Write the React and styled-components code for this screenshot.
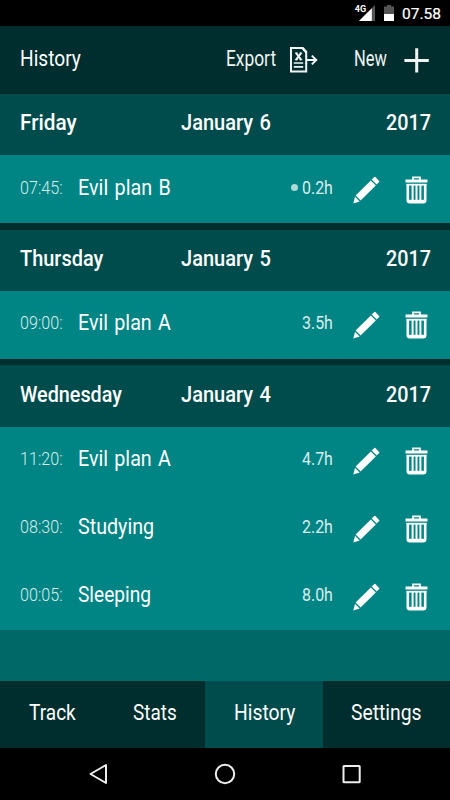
import React, { useLayoutEffect, useRef, useState } from 'react';
import styled, { createGlobalStyle } from 'styled-components';

const GlobalStyle = createGlobalStyle`
  * {
    box-sizing: border-box;
  }

  body {
    margin: 0;
    background: #000;
    font-family: Roboto, "Liberation Sans", sans-serif;
  }
`;

const Screen = styled.div`
  width: 450px;
  height: 800px;
  display: flex;
  flex-direction: column;
  overflow: hidden;
  background: #006866;
  color: #fff;
`;

const StatusBar = styled.div`
  height: 26px;
  flex-shrink: 0;
  display: flex;
  justify-content: flex-end;
  align-items: center;
  padding-right: 9px;
  background: #000;
`;

const NetworkLabel = styled.span`
  font-size: 9px;
  font-weight: 700;
  line-height: 9px;
  align-self: flex-start;
  margin: 5px -7px 0 0;
  z-index: 1;
`;

const Clock = styled.span`
  font-size: 15.5px;
  margin-left: 8px;
  padding-top: 2px;
  -webkit-text-stroke: 0.2px #fff;
`;

const StatusSvg = styled.svg`
  display: block;
  margin-left: ${({ $gap }) => $gap || 0}px;
`;

const Header = styled.header`
  height: 68px;
  flex-shrink: 0;
  display: flex;
  align-items: center;
  padding: 0 21px 0 20px;
  background: #002d2d;
`;

const HeaderButton = styled.button`
  display: flex;
  align-items: center;
  gap: ${({ $gap }) => $gap}px;
  margin-left: ${({ $push }) => $push};
  padding: 0;
  border: 0;
  background: none;
  color: #f0f4f4;
  font-family: inherit;
`;

const TextBox = styled.span`
  display: block;
  flex-shrink: 0;
  width: ${({ $width }) => $width}px;
  padding-bottom: ${({ $lift }) => $lift}px;
  text-align: left;
  white-space: nowrap;
  font-size: ${({ $small }) => ($small ? 18 : 21.5)}px;
  font-weight: ${({ $weight }) => $weight || 400};
  color: ${({ $muted }) => ($muted ? '#d8eeee' : 'inherit')};
  word-spacing: 1.5px;
`;

const TextRun = styled.span`
  display: inline-block;
  transform-origin: 0 50%;
`;

const DayHeader = styled.div`
  height: 61.3px;
  display: flex;
  align-items: center;
  padding: 0 19px 0 20px;
  background: #004b4b;
`;

const YearCell = styled.div`
  display: flex;
  flex: 1;
  justify-content: flex-end;
`;

const NameCell = styled.div`
  width: 161px;
`;

const History = styled.main`
  flex: 1;
  min-height: 0;
`;

const Divider = styled.div`
  height: 6.6px;
  background: #002d2d;
`;

const Row = styled.div`
  height: 67.8px;
  display: flex;
  align-items: center;
  padding: 0 22px 0 20px;
  background: #008484;
`;

const RowName = styled.div`
  flex: 1;
  margin-left: 15px;
`;

const Dot = styled.span`
  width: 7px;
  height: 7px;
  margin: 0 4px 3px 0;
  border-radius: 50%;
  background: #acd9d9;
`;

const IconButton = styled.button`
  display: flex;
  padding: 1px 0 0;
  border: 0;
  margin-left: ${({ $gap }) => $gap}px;
  background: none;
  color: #fff;
`;

const Tabs = styled.nav`
  height: 67px;
  flex-shrink: 0;
  display: flex;
  background: #002d2d;
`;

const Tab = styled.button`
  width: ${({ $width }) => $width}px;
  display: flex;
  align-items: center;
  justify-content: center;
  padding: 0;
  border: 0;
  background: ${({ $active }) => ($active ? '#004b4b' : 'transparent')};
  color: #fff;
  font-family: inherit;
`;

const SystemBar = styled.div`
  height: 52px;
  flex-shrink: 0;
  display: flex;
  align-items: center;
  justify-content: space-between;
  padding: 0 88px;
  background: #000;
`;

// Condenses a label so that it fills the width given for it
const Label = ({ width, lift = 4, small, weight, muted, children }) => {
  const ref = useRef(null);
  const [scale, setScale] = useState(1);

  useLayoutEffect(() => {
    setScale(width / ref.current.offsetWidth);
  }, [width, children]);

  return (
    <TextBox $width={width} $lift={lift} $small={small} $weight={weight} $muted={muted}>
      <TextRun ref={ref} style={{ transform: `scaleX(${scale})` }}>{children}</TextRun>
    </TextBox>
  );
};

const ExportIcon = () => (
  <svg width="28" height="26" viewBox="0 0 28 26" fill="none" stroke="currentColor">
    <path d="M16.2 9.5V5L12.6 1H1v23.6h15.2V16" strokeWidth="2" />
    <path d="M16.2 9v8" strokeWidth="2" />
    <path d="M12.4 1l4 4.4" strokeWidth="2.4" />
    <path d="M6 5.8l5.2 7M11.2 5.8l-5.2 7" strokeWidth="2" />
    <path d="M5 6h2.6M9.6 6h2.6M5 12.6h2.6M9.6 12.6h2.6" strokeWidth="1.1" />
    <path d="M3.8 16h9.4M3.8 19.8h9.4" strokeWidth="1.7" />
    <path d="M16.5 13h10M21.8 8.6l4.5 4.4-4.5 4.4" strokeWidth="2" />
  </svg>
);

const PlusIcon = () => (
  <svg width="25" height="25" viewBox="0 0 25 25" fill="currentColor">
    <path d="M11.2 0.3h3v10.6h10.6V14H14.2v10.4h-3V14H0.4v-3.1h10.8z" />
  </svg>
);

const PencilIcon = () => (
  <svg width="27" height="28" viewBox="0 0 27 28" fill="currentColor">
    <path d="M21.2 1.1Q21.8.5 22.4 1.1l3.7 3.8q.6.6 0 1.2L23.6 8.6 18.7 3.6z" />
    <path d="M17.8 4.5l5 5L7.6 24.5l-5-5z" />
    <path d="M2 20.8l4.7 4.8L0.3 27.4z" />
  </svg>
);

const TrashIcon = () => (
  <svg width="23" height="28" viewBox="0 0 23 28" fill="none" stroke="currentColor">
    <path d="M8 4V1.3h7V4" strokeWidth="1.7" />
    <path d="M0.5 5h22" strokeWidth="3" />
    <path d="M2.8 8v16.2q0 2 2 2h13.4q2 0 2-2V8" strokeWidth="2.6" />
    <path d="M1.5 8.7h20" strokeWidth="1.8" />
    <path d="M7.6 9v16M11.5 9v16M15.4 9v16" strokeWidth="2" />
    <path d="M3 25.2h17" strokeWidth="2.8" />
  </svg>
);

const days = [
  {
    name: 'Friday', nameWidth: 57, date: 'January 6',
    entries: [{ time: '07:45:', name: 'Evil plan B', width: 93, hours: '0.2h', running: true }],
  },
  {
    name: 'Thursday', nameWidth: 83.5, date: 'January 5',
    entries: [{ time: '09:00:', name: 'Evil plan A', width: 92.5, hours: '3.5h' }],
  },
  {
    name: 'Wednesday', nameWidth: 102, date: 'January 4',
    entries: [
      { time: '11:20:', name: 'Evil plan A', width: 92.5, hours: '4.7h' },
      { time: '08:30:', name: 'Studying', width: 76, hours: '2.2h' },
      { time: '00:05:', name: 'Sleeping', width: 73, hours: '8.0h' },
    ],
  },
];

const tabs = [
  { name: 'Track', width: 104, text: 47 },
  { name: 'Stats', width: 101.4, text: 44 },
  { name: 'History', width: 117.3, text: 61 },
  { name: 'Settings', width: 127.3, text: 71 },
];

const App = () => {
  const [active, setActive] = useState('History');

  return (
    <>
      <GlobalStyle />
      <Screen>
        <StatusBar>
          <NetworkLabel>4G</NetworkLabel>
          <StatusSvg width="16" height="16" viewBox="0 0 16 16">
            <path d="M16 0v16H0z" fill="#555" />
            <path d="M12.8 3.2V16H0z" fill="#fff" />
          </StatusSvg>
          <StatusSvg $gap={9} width="10" height="16" viewBox="0 0 10 16">
            <path d="M3 0h4v1.5h3V9H0V1.5h3z" fill="#555" />
            <path d="M0 9h10v7H0z" fill="#fff" />
          </StatusSvg>
          <Clock>07.58</Clock>
        </StatusBar>

        <Header>
          <Label width={60.5}>History</Label>
          <HeaderButton $gap={14} $push="auto">
            <Label width={50}>Export</Label>
            <ExportIcon />
          </HeaderButton>
          <HeaderButton $gap={17} $push="36px">
            <Label width={33}>New</Label>
            <PlusIcon />
          </HeaderButton>
        </Header>

        <History>
          {days.map((day, index) => (
            <section key={day.name}>
              {index > 0 && <Divider />}
              <DayHeader>
                <NameCell>
                  <Label width={day.nameWidth} weight={500}>{day.name}</Label>
                </NameCell>
                <Label width={89.5} weight={500}>{day.date}</Label>
                <YearCell>
                  <Label width={45} weight={500}>2017</Label>
                </YearCell>
              </DayHeader>
              {day.entries.map((entry) => (
                <Row key={entry.time}>
                  <Label width={43} small weight={300} muted>{entry.time}</Label>
                  <RowName>
                    <Label width={entry.width}>{entry.name}</Label>
                  </RowName>
                  {entry.running && <Dot />}
                  <Label width={31} small muted>{entry.hours}</Label>
                  <IconButton $gap={20} aria-label="Edit"><PencilIcon /></IconButton>
                  <IconButton $gap={25} aria-label="Delete"><TrashIcon /></IconButton>
                </Row>
              ))}
            </section>
          ))}
        </History>

        <Tabs>
          {tabs.map((tab) => (
            <Tab
              key={tab.name}
              $width={tab.width}
              $active={tab.name === active}
              onClick={() => setActive(tab.name)}
            >
              <Label width={tab.text}>{tab.name}</Label>
            </Tab>
          ))}
        </Tabs>

        <SystemBar>
          <svg width="20" height="22" viewBox="0 0 20 22" fill="none" stroke="#eee" strokeWidth="2" strokeLinejoin="round">
            <path d="M2.5 11L18 2v18z" />
          </svg>
          <svg width="22" height="22" viewBox="0 0 22 22" fill="none" stroke="#eee" strokeWidth="2">
            <circle cx="11" cy="11" r="9.2" />
          </svg>
          <svg width="20" height="20" viewBox="0 0 20 20" fill="none" stroke="#eee" strokeWidth="2">
            <rect x="1.5" y="2" width="16.2" height="16.2" rx="0.5" />
          </svg>
        </SystemBar>
      </Screen>
    </>
  );
};

export default App;
